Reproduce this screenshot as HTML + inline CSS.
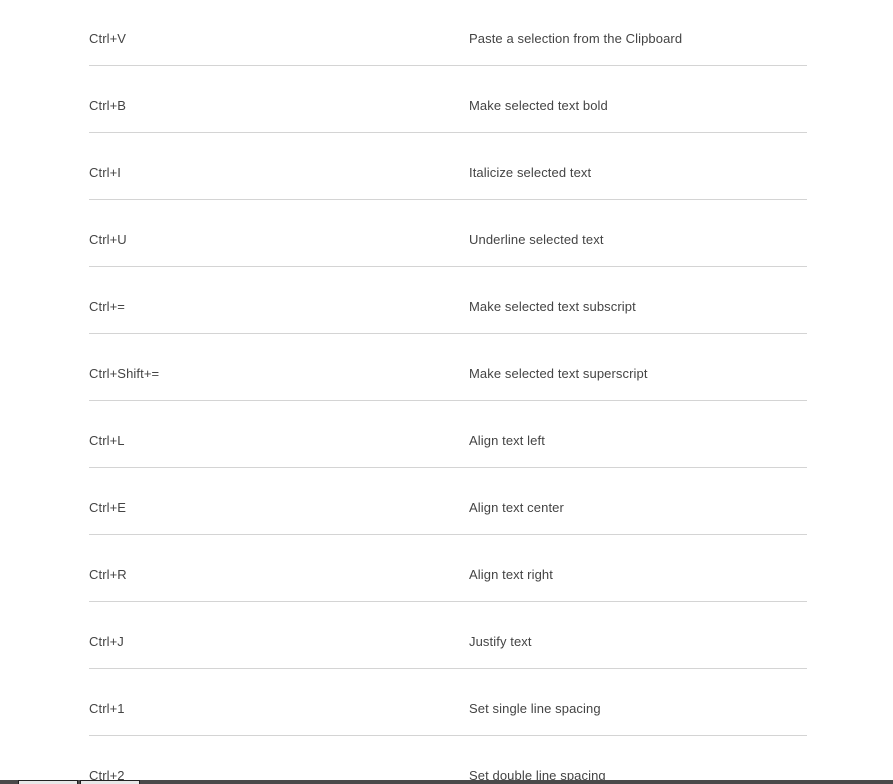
<!DOCTYPE html>
<html style="height:784px;overflow:hidden"><head><style>
body{margin:0;width:893px;height:784px;overflow:hidden;background:#fff;font-family:"Liberation Sans",sans-serif;font-size:13px;letter-spacing:0.1px;color:#444;position:relative}
.r{position:absolute;left:89px;width:718px;height:67px;border-bottom:1px solid #d4d4d4}
.r span{position:absolute;top:33px;line-height:16px}
.r .b{left:380px}
.bar{position:absolute;left:0;top:780px;width:893px;height:4px;background:#4a4a4a}
.t{position:absolute;top:780px;height:4px;background:#e8e8e8;border:1px solid #222;border-bottom:0;box-sizing:border-box}
</style></head><body>
<div class="r" style="top:-2px"><span>Ctrl+V</span><span class="b">Paste a selection from the Clipboard</span></div>
<div class="r" style="top:65px"><span>Ctrl+B</span><span class="b">Make selected text bold</span></div>
<div class="r" style="top:132px"><span>Ctrl+I</span><span class="b">Italicize selected text</span></div>
<div class="r" style="top:199px"><span>Ctrl+U</span><span class="b">Underline selected text</span></div>
<div class="r" style="top:266px"><span>Ctrl+=</span><span class="b">Make selected text subscript</span></div>
<div class="r" style="top:333px"><span>Ctrl+Shift+=</span><span class="b">Make selected text superscript</span></div>
<div class="r" style="top:400px"><span>Ctrl+L</span><span class="b">Align text left</span></div>
<div class="r" style="top:467px"><span>Ctrl+E</span><span class="b">Align text center</span></div>
<div class="r" style="top:534px"><span>Ctrl+R</span><span class="b">Align text right</span></div>
<div class="r" style="top:601px"><span>Ctrl+J</span><span class="b">Justify text</span></div>
<div class="r" style="top:668px"><span>Ctrl+1</span><span class="b">Set single line spacing</span></div>
<div class="r" style="top:735px;height:45px;border-bottom:0"><span>Ctrl+2</span><span class="b">Set double line spacing</span></div>
<div class="bar"></div>
<div class="t" style="left:18px;width:60px"></div>
<div class="t" style="left:80px;width:60px"></div>
</body></html>
